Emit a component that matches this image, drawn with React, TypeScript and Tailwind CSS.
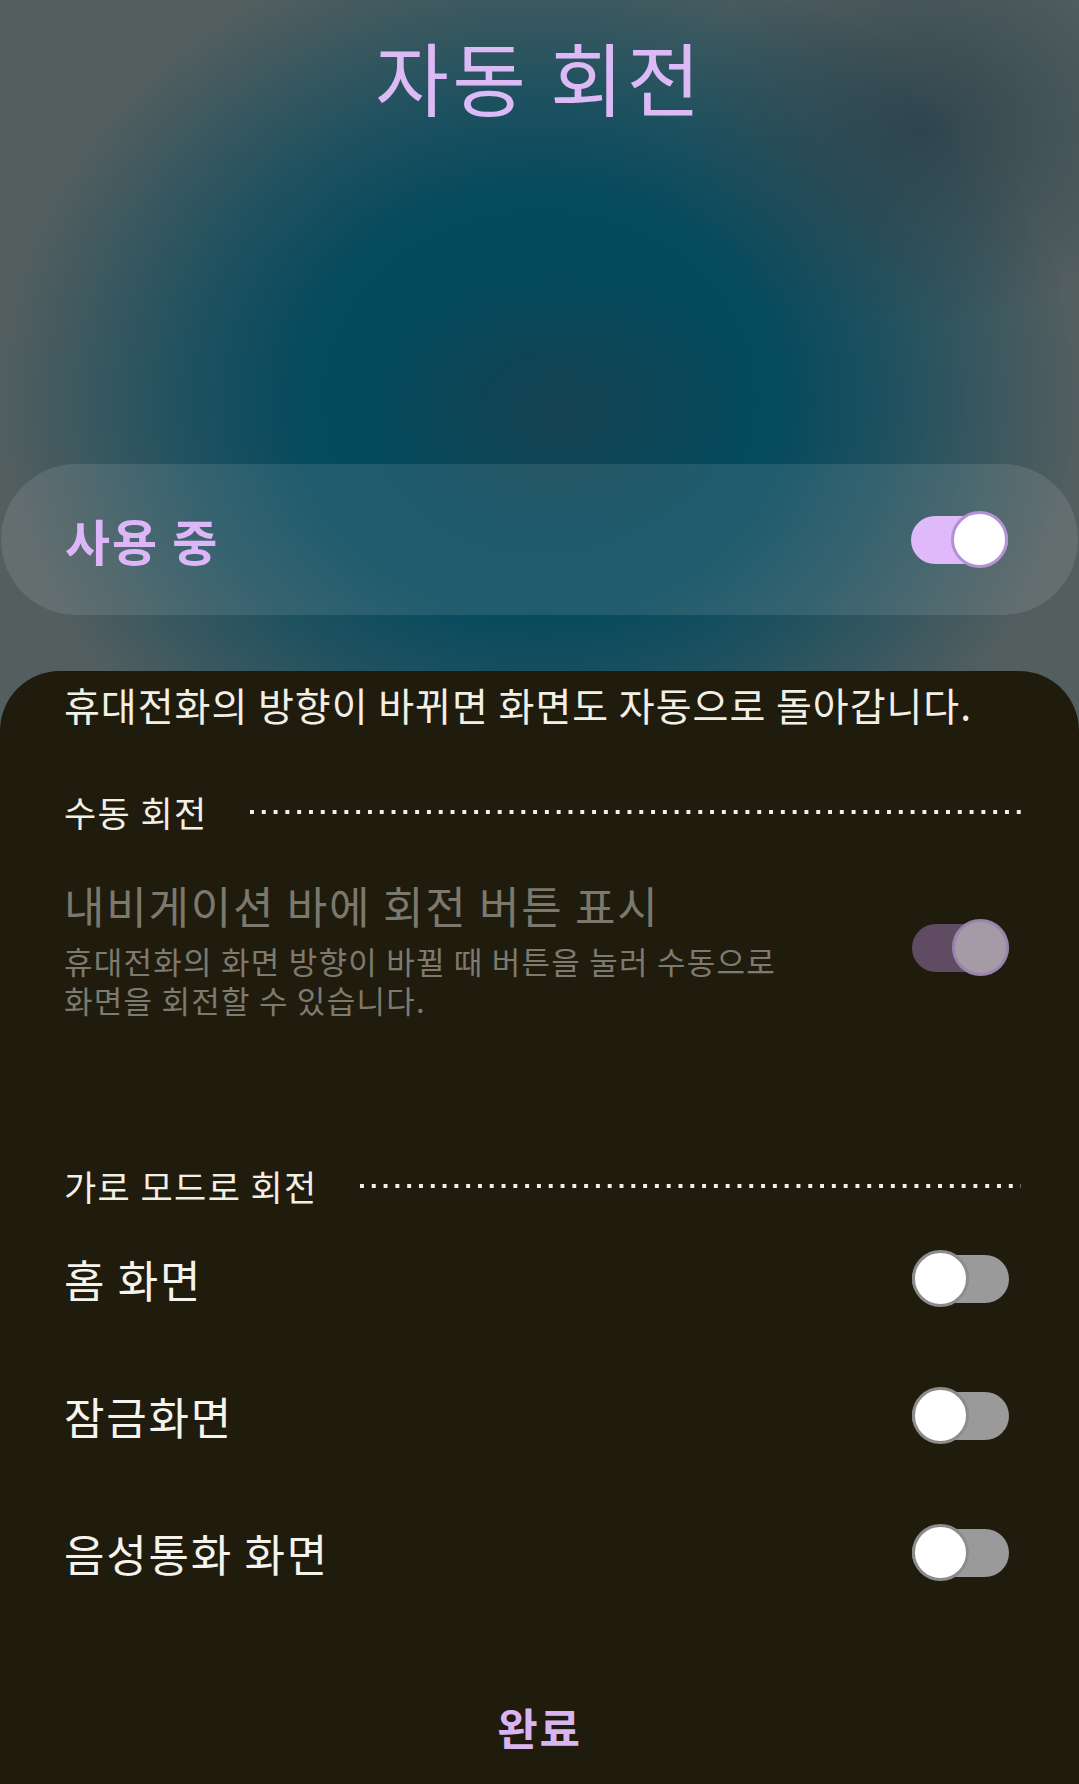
import React from 'react';

type ToggleKind = 'on' | 'disabled' | 'off';

function Toggle({ kind }: { kind: ToggleKind }) {
  const track =
    kind === 'on' ? 'bg-[#e0b9fb]' : kind === 'disabled' ? 'bg-[#5f4c62]' : 'bg-[#9a9a9a]';
  const thumb =
    kind === 'on'
      ? 'right-0 bg-white border-[#b391d3]'
      : kind === 'disabled'
        ? 'right-0 bg-[#a59ba7] border-[#9a84ad]'
        : 'left-0 bg-white border-[#8c8c8c]';

  return (
    <div className="relative w-[97px] h-[57px] flex items-center shrink-0">
      <div className={`w-full h-[48px] rounded-full ${track}`} />
      <div className={`absolute top-0 w-[57px] h-[57px] rounded-full border-[3px] ${thumb}`} />
    </div>
  );
}

function SectionHeader({ label }: { label: string }) {
  return (
    <div className="flex items-center h-[33px] pr-[58px]">
      <span className="text-[35px] leading-[33px] tracking-[0.04em] text-[#f2efe6] whitespace-nowrap">{label}</span>
      <div className="flex-1 ml-[42px] h-[4px] bg-[linear-gradient(to_right,#f2efe6_4px,transparent_4px)] bg-[length:11.8px_4px] bg-repeat-x" />
    </div>
  );
}

function SwitchRow({ label }: { label: string }) {
  return (
    <div className="flex items-center justify-between h-[137px] pr-[70px]">
      <span className="text-[44px] leading-[42px] tracking-[0.04em] text-[#f5f3ed]">{label}</span>
      <Toggle kind="off" />
    </div>
  );
}

export default function App() {
  return (
    <div className="w-[1079px] h-[1784px] overflow-hidden flex flex-col font-['Noto_Sans_CJK_KR','Noto_Sans',sans-serif] bg-[#535e5f]">
      <div className="flex flex-col bg-[radial-gradient(ellipse_240px_200px_at_920px_130px,rgba(40,64,74,0.8),rgba(40,64,74,0)),radial-gradient(ellipse_180px_130px_at_560px_410px,rgba(40,62,70,0.5),rgba(40,62,70,0)),radial-gradient(ellipse_540px_470px_at_540px_400px,#03475b_0%,#064a5d_45%,rgba(26,80,96,0.85)_68%,rgba(83,94,95,0)_100%)] flex-1">
        {/* title */}
        <h1 className="mt-[37px] h-[76px] text-center text-[80px] leading-[76px] tracking-[0.04em] font-normal text-[#dcbaf6]">
          자동 회전
        </h1>

        {/* master switch */}
        <div className="mt-[351px] mx-[1px] h-[151px] rounded-full bg-white/10 flex items-center justify-between pl-[64px] pr-[70px]">
          <span className="text-[49px] leading-[47px] tracking-[0.04em] font-bold text-[#dcb6f7]">사용 중</span>
          <Toggle kind="on" />
        </div>

        {/* sheet */}
        <div className="mt-[56px] flex-1 rounded-t-[60px] bg-[#201c0d] pl-[64px] flex flex-col">
          <p className="mt-[15px] text-[39px] leading-[37px] tracking-[0.025em] text-[#f2efe6] whitespace-nowrap">
            휴대전화의 방향이 바뀌면 화면도 자동으로 돌아갑니다.
          </p>

          <div className="mt-[72px]">
            <SectionHeader label="수동 회전" />
          </div>

          <div className="mt-[56px] flex items-center justify-between pr-[70px]">
            <div>
              <div className="text-[44px] leading-[42px] tracking-[0.04em] text-[#7b786e]">내비게이션 바에 회전 버튼 표시</div>
              <div className="mt-[15px] text-[31px] leading-[39px] tracking-[0.04em] text-[#7d7a70]">
                휴대전화의 화면 방향이 바뀔 때 버튼을 눌러 수동으로
                <br />
                화면을 회전할 수 있습니다.
              </div>
            </div>
            <div className="-mt-[8px]">
              <Toggle kind="disabled" />
            </div>
          </div>

          <div className="mt-[150px]">
            <SectionHeader label="가로 모드로 회전" />
          </div>

          <div className="mt-[8px] flex flex-col">
            <SwitchRow label="홈 화면" />
            <SwitchRow label="잠금화면" />
            <SwitchRow label="음성통화 화면" />
          </div>

          <div className="mt-[85px] -ml-[64px] text-center text-[44px] leading-[42px] tracking-[0.04em] font-bold text-[#d9b4f2]">
            완료
          </div>
        </div>
      </div>
    </div>
  );
}
